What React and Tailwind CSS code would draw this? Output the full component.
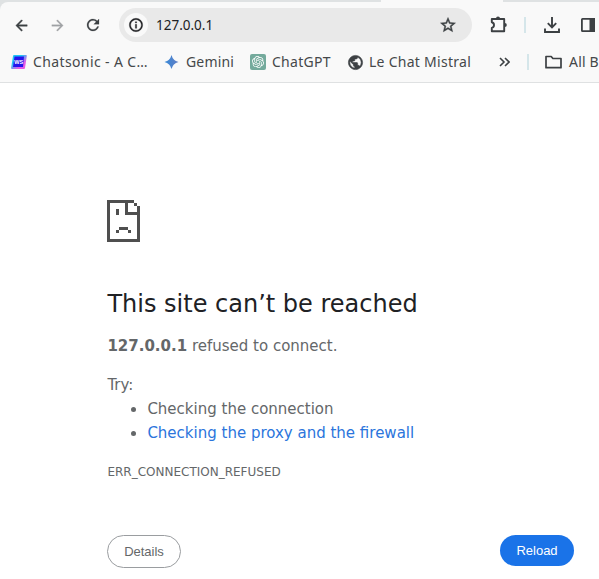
import { SiOpenai } from "react-icons/si";

const ICONS = {
  back: "M20 11H7.83l5.59-5.59L12 4l-8 8 8 8 1.41-1.41L7.83 13H20v-2z",
  forward: "M12 4l-1.41 1.41L16.17 11H4v2h12.17l-5.58 5.59L12 20l8-8z",
  refresh:
    "M17.65 6.35A7.958 7.958 0 0 0 12 4c-4.42 0-7.99 3.58-7.99 8s3.57 8 7.99 8c3.73 0 6.84-2.55 7.73-6h-2.08A5.99 5.99 0 0 1 12 18c-3.31 0-6-2.69-6-6s2.69-6 6-6c1.66 0 3.14.69 4.22 1.78L13 11h7V4l-2.35 2.35z",
  info: "M11 7h2v2h-2zm0 4h2v6h-2zm1-9C6.48 2 2 6.48 2 12s4.48 10 10 10 10-4.48 10-10S17.52 2 12 2zm0 18c-4.41 0-8-3.59-8-8s3.59-8 8-8 8 3.59 8 8-3.59 8-8 8z",
  star: "M22 9.24l-7.19-.62L12 2 9.19 8.63 2 9.24l5.46 4.73L5.82 21 12 17.27 18.18 21l-1.63-7.03L22 9.24zM12 15.4l-3.76 2.27 1-4.28-3.32-2.88 4.38-.38L12 6.1l1.71 4.04 4.38.38-3.32 2.88 1 4.28L12 15.4z",
  globe:
    "M12 2C6.48 2 2 6.48 2 12s4.48 10 10 10 10-4.48 10-10S17.52 2 12 2zm-1 17.93c-3.95-.49-7-3.85-7-7.93 0-.62.08-1.21.21-1.79L9 15v1c0 1.1.9 2 2 2v1.93zm6.9-2.54c-.26-.81-1-1.39-1.9-1.39h-1v-3c0-.55-.45-1-1-1H8v-2h2c.55 0 1-.45 1-1V7h2c1.1 0 2-.9 2-2v-.41c2.93 1.19 5 4.06 5 7.41 0 2.08-.8 3.97-2.1 5.39z",
};

function Icon({ name, className }) {
  return (
    <svg viewBox="0 0 24 24" fill="currentColor" stroke="currentColor" className={className}>
      <path d={ICONS[name]} />
    </svg>
  );
}

function SadFile() {
  return (
    <svg width="33" height="42" viewBox="0 0 11 14" shapeRendering="crispEdges" fill="#4f4f4f">
      <path d="M0 0h9v1H7v3h4v1H6V1H1v12h9V2h1v12H0z M9 1h1v1H9z M3 3h1v2H3z M4 9h3v1H4z M3 10h1v1H3z M7 10h1v1H7z" />
    </svg>
  );
}

function Toolbar() {
  return (
    <div className="flex h-[46px] items-center text-[#3c4043]">
      <Icon name="back" className="ml-[13px] size-[17px] shrink-0 stroke-[0.6]" />
      <Icon name="forward" className="ml-[19px] size-[17px] shrink-0 stroke-[0.4] text-[#a0a3a5]" />
      <Icon name="refresh" className="ml-[18px] size-[18px] shrink-0 stroke-[0.3]" />
      <div className="ml-[17px] flex h-[34px] w-[353px] shrink-0 items-center rounded-full bg-[#e9e9e9]">
        <div className="ml-[5px] flex size-6 items-center justify-center rounded-full bg-[#f9f9f9]">
          <Icon name="info" className="size-[16px] stroke-[0.5] text-[#202124]" />
        </div>
        <span className="ml-[8px] text-[13.5px] text-[#202124]">127.0.0.1</span>
        <Icon name="star" className="mr-[15px] ml-auto size-[18px] stroke-[0.6]" />
      </div>
      <svg className="ml-[17px] shrink-0" width="20" height="20" viewBox="0 0 20 20">
        <path d="M2.8 4h12.4v12.2H2.8v-3.3q2.2-.5 2.2-2.8T2.8 7.3z" fill="none" stroke="currentColor" strokeWidth="1.9" strokeLinejoin="round" />
        <path d="M7 3.4a2 2 0 0 1 4 0zM15.8 8a2 2 0 0 1 0 4z" fill="currentColor" />
      </svg>
      <div className="ml-[15px] h-4 w-[2px] shrink-0 bg-[#d5e6ea]" />
      <svg className="ml-[17px] shrink-0" width="18" height="18" viewBox="0 0 18 18" fill="none" stroke="currentColor" strokeWidth="1.9">
        <path d="M9 1v10M4.8 7.2 9 11.4l4.2-4.2M2 12.5V16h14v-3.5" />
      </svg>
      <svg className="ml-[19px] shrink-0" width="16" height="16" viewBox="0 0 16 16">
        <rect x="1.9" y="1.9" width="12.2" height="12.2" rx="0.6" fill="none" stroke="currentColor" strokeWidth="1.8" />
        <path d="M9.5 1h5.5v14H9.5z" fill="currentColor" />
      </svg>
    </div>
  );
}

function Bookmarks() {
  return (
    <div className="flex h-[28px] items-center text-[14px] whitespace-nowrap text-[#45484a]">
      <svg className="ml-[11px] shrink-0" width="16" height="14" viewBox="0 0 16 14">
        <defs>
          <linearGradient id="edge" x1="0" y1="0" x2="1" y2="1">
            <stop offset="0.35" stopColor="#20c5f5" />
            <stop offset="0.7" stopColor="#e65be6" />
          </linearGradient>
        </defs>
        <path d="M3 0h12q1 0 .8 1L14 13q-.2 1-1 1H1q-1 0-.9-1L2 1q.2-1 1-1z" fill="url(#edge)" />
        <path d="M3.5 1.5h9.5l-1 10.5H2z" fill="#2413ed" />
        <text x="7.8" y="9" textAnchor="middle" fontSize="5.5" fontWeight="700" fontFamily="Liberation Sans" fill="white">WS</text>
      </svg>
      <span className="ml-[6px] w-[115px] shrink-0 pb-[2px] tracking-[0.38px]">Chatsonic - A C…</span>
      <svg className="ml-[16px] shrink-0" width="15" height="14" viewBox="0 0 14 14">
        <defs>
          <linearGradient id="spark"><stop stopColor="#3689d8" /><stop offset="1" stopColor="#637fc4" /></linearGradient>
        </defs>
        <path d="M7 0Q8.4 5.6 14 7 8.4 8.4 7 14 5.6 8.4 0 7 5.6 5.6 7 0" fill="url(#spark)" />
      </svg>
      <span className="ml-[7px] w-[48px] shrink-0 pb-[2px] tracking-[0.15px]">Gemini</span>
      <div className="ml-[16px] flex size-4 shrink-0 items-center justify-center rounded-[2px] bg-[#74aa9c] text-white">
        <SiOpenai className="size-[12px]" />
      </div>
      <span className="ml-[6px] w-[59px] shrink-0 pb-[2px] tracking-[0.27px]">ChatGPT</span>
      <Icon name="globe" className="ml-[16px] size-[17px] shrink-0 stroke-[0.8] text-[#3c4043]" />
      <span className="ml-[5px] w-[102px] shrink-0 pb-[2px] tracking-[0.27px]">Le Chat Mistral</span>
      <svg className="ml-[28px] shrink-0" width="11" height="10" viewBox="0 0 11 10" fill="none" stroke="#3c4043" strokeWidth="1.6">
        <path d="m1 1 4 4-4 4M6 1l4 4-4 4" />
      </svg>
      <div className="ml-[17px] h-4 w-[2px] shrink-0 bg-[#d5e6ea]" />
      <svg className="ml-[16px] shrink-0" width="17" height="14" viewBox="0 0 17 14" fill="none" stroke="#3c4043" strokeWidth="1.7" strokeLinejoin="round">
        <path d="M1 1.5h5.2l1.7 2H16v9.2H1z" />
      </svg>
      <span className="ml-[7px] shrink-0 pb-[2px] tracking-[0.2px]">All Bookmarks</span>
    </div>
  );
}

export default function App() {
  return (
    <div className="h-[579px] w-[599px] overflow-hidden bg-white font-['DejaVu_Sans',sans-serif]">
      <header className="h-[83px] border-b border-[#dfe1e2] bg-[#dfe2e3] font-['Noto_Sans',sans-serif]">
        <div className="flex h-[2px] justify-end">
          <div className="mr-[96px] w-[122px] bg-[#f9f9f9]" />
        </div>
        <div className="h-[80px] rounded-tl-[8px] bg-[#f9f9f9]">
          <Toolbar />
          <Bookmarks />
        </div>
      </header>
      <main className="flex flex-col pt-[117px] pl-[107px] text-[15px] leading-6 text-[#646769]">
        <SadFile />
        <h1 className="mt-[47px] pl-[0.4px] text-[24px] leading-[30px] text-[#202124]">This site can’t be reached</h1>
        <p className="mt-[15px] pl-[0.4px]"><b>127.0.0.1</b> refused to connect.</p>
        <p className="mt-[15px] pl-[0.4px]">Try:</p>
        <ul className="list-disc pl-[40.4px]">
          <li>Checking the connection</li>
          <li><a className="text-[#2b75dc]">Checking the proxy and the firewall</a></li>
        </ul>
        <p className="mt-[15px] pl-[0.4px] text-[12px]">ERR_CONNECTION_REFUSED</p>
        <div className="mt-[51px] flex w-[467px] items-start justify-between font-['Liberation_Sans',sans-serif] text-[13px]">
          <button className="h-[33px] w-[74px] rounded-full border border-[#9a9da0]">Details</button>
          <button className="h-[31px] w-[74px] rounded-full bg-[#1a73e8] text-white">Reload</button>
        </div>
      </main>
    </div>
  );
}
